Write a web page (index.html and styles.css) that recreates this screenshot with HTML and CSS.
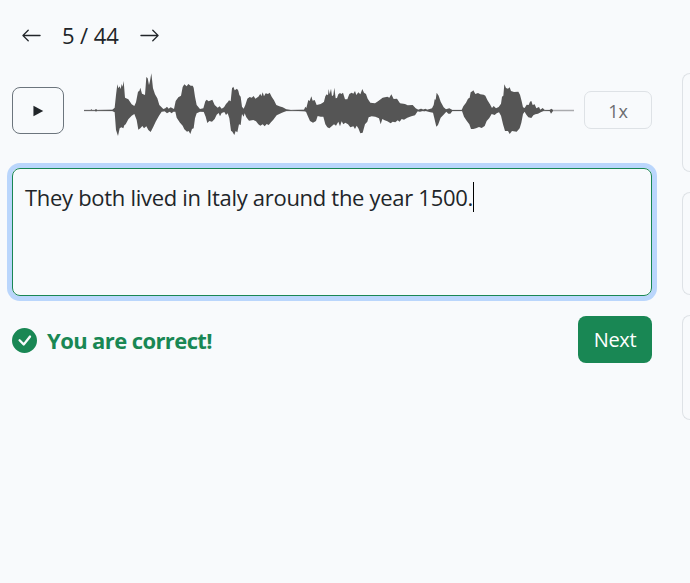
FILE: index.html
```html
<!DOCTYPE html>
<html lang="en">
<head>
<meta charset="utf-8">
<title>Dictation</title>
<link rel="stylesheet" href="styles.css">
</head>
<body>
<div class="page">
  <main class="exercise">
    <nav class="pager">
      <svg class="arrow" viewBox="0 0 16 16"><path fill-rule="evenodd" d="M15 8a.5.5 0 0 0-.5-.5H2.707l3.147-3.146a.5.5 0 1 0-.708-.708l-4 4a.5.5 0 0 0 0 .708l4 4a.5.5 0 0 0 .708-.708L2.707 8.5H14.5A.5.5 0 0 0 15 8"/></svg>
      <span class="count">5 / 44</span>
      <svg class="arrow" viewBox="0 0 16 16"><path fill-rule="evenodd" d="M1 8a.5.5 0 0 1 .5-.5h11.793l-3.147-3.146a.5.5 0 0 1 .708-.708l4 4a.5.5 0 0 1 0 .708l-4 4a.5.5 0 0 1-.708-.708L13.293 8.5H1.5A.5.5 0 0 1 1 8"/></svg>
    </nav>
    <div class="player">
      <button class="play" aria-label="Play"><svg viewBox="0 0 12 12"><path d="M.5.2 11.2 6 .5 11.8z"/></svg></button>
      <svg class="wave" viewBox="0 0 1470 210">
        <path class="axis" d="M0 119.500H1470v4H0z"/>
        <path transform="translate(-12 -15)" d="M12 135 32 135 34 132 36 135 45 135 48 131 51 135 97 134 104 128 108 90 112 58 115 70 119 64 122 72 125 57 128 65 131 48 135 98 145 103 155 118 163 123 168 112 174 80 178 78 181 68 186 86 195 90 199 36 203 40 207 60 210 48 214 25 219 70 225 88 232 100 238 120 250 132 256 130 261 125 266 131 272 127 282 132 287 108 295 97 303 92 308 66 313 58 320 64 325 57 332 62 338 62 341 68 345 95 350 120 360 132 372 132 372 140 360 140 350 145 345 160 341 190 336 192 331 207 326 198 321 200 313 193 308 182 300 173 290 158 286 140 280 140 275 145 269 140 261 145 254 139 245 140 237 152 227 170 220 185 212 201 205 195 199 184 192 190 187 183 181 190 175 194 170 165 163 147 155 152 145 163 137 178 133 181 130 190 124 187 119 190 114 213 108 195 104 142 97 138 51 137 48 140 45 137 12 137z"/>
        <path transform="translate(348 -15)" d="M0 132 10 130 16 109 20 104 26 109 37 104 44 120 53 128 59 124 65 131 72 127 78 117 83 112 87 106 92 109 96 70 100 65 104 76 111 71 115 77 118 90 122 95 126 125 131 131 136 120 142 101 149 96 155 98 161 93 166 101 175 95 181 86 184 94 188 82 192 94 197 85 204 87 209 83 215 95 222 106 229 120 238 124 248 127 259 133 272 135 312 134 316 125 319 129 325 105 329 108 334 94 338 107 344 105 350 120 362 117 373 110 373 155 362 155 353 153 348 168 339 173 330 168 323 152 318 140 313 139 277 137 259 138 246 143 230 151 220 164 213 172 206 180 200 177 194 184 188 178 181 182 175 178 168 169 160 165 147 167 139 157 134 145 131 155 126 147 122 180 117 178 112 202 107 198 103 210 97 200 93 197 88 160 83 145 78 150 73 141 65 144 60 154 56 144 50 149 44 162 36 170 28 168 22 174 17 155 11 140 0 138z"/>
        <path transform="translate(648 -15)" d="M70 118 76 94 80 88 84 91 86 72 89 88 93 71 96 94 100 90 103 68 107 100 111 99 115 88 120 84 124 87 129 83 135 103 142 103 148 87 155 83 160 86 165 78 169 90 175 82 181 88 187 72 192 83 198 87 203 101 211 113 225 115 234 109 248 98 262 95 268 98 274 88 281 102 291 101 300 115 315 117 323 121 338 120 347 130 355 134 362 131 367 134 375 133 375 139 367 138 360 140 353 139 345 151 334 154 322 158 312 164 305 162 299 170 293 166 286 172 278 170 272 175 262 169 254 166 247 162 242 178 237 160 226 155 215 154 206 157 202 170 195 178 188 203 181 205 175 190 170 182 165 192 160 184 151 187 144 178 136 173 130 178 125 169 120 184 115 170 108 182 102 178 95 184 88 190 82 187 76 178 70 155z"/>
        <path transform="translate(1008 -15)" d="M0 133 5 131 10 135 16 131 22 134 36 130 41 120 44 103 47 104 50 83 56 92 62 110 71 127 78 133 88 130 97 135 125 135 130 124 138 113 144 101 149 98 152 82 157 79 160 76 166 87 174 84 181 88 191 89 196 92 202 105 210 118 216 129 221 123 228 130 236 126 243 116 246 95 250 92 253 58 258 69 264 71 269 67 273 78 282 81 295 80 300 89 305 109 309 127 314 129 320 119 326 120 330 110 334 108 338 120 344 118 349 130 357 126 361 134 368 129 374 135 389 135 394 131 399 135 399 138 393 146 389 138 372 137 362 142 354 146 346 148 340 151 334 159 325 157 318 148 314 140 309 147 304 173 299 190 290 200 276 198 269 207 264 198 255 198 249 178 243 152 237 142 230 145 224 150 215 147 208 159 200 168 194 183 185 189 177 186 168 190 160 192 153 192 148 178 140 167 132 155 126 138 97 138 91 146 85 146 79 140 70 150 62 158 54 180 49 185 43 160 39 143 28 141 18 138 0 138z"/>
      </svg>
      <button class="speed">1x</button>
    </div>
    <div class="answer"><span class="sentence">They both lived in Italy around the year 1500.</span><span class="caret"></span></div>
    <div class="result">
      <svg class="check" viewBox="0 0 16 16"><path d="M16 8A8 8 0 1 1 0 8a8 8 0 0 1 16 0m-3.970-3.030a.75.75 0 0 0-1.080.022L7.477 9.417 5.384 7.323a.75.75 0 0 0-1.060 1.060L6.970 11.030a.75.75 0 0 0 1.079-.020l3.992-4.990a.75.75 0 0 0-.010-1.050z"/></svg>
      <strong class="verdict">You are correct!</strong>
      <button class="next">Next</button>
    </div>
  </main>
  <aside class="cards">
    <div class="card first"></div>
    <div class="card second"></div>
    <div class="card third"></div>
  </aside>
</div>
</body>
</html>
```
FILE: styles.css
```css
* { box-sizing: border-box; }
body {
  margin: 0;
  height: 583px;
  overflow: hidden;
  background: #f8fafc;
  color: #212529;
  font-family: "Open Sans", "Noto Sans", sans-serif;
}
button { font-family: inherit; padding: 0; background: transparent; }
.page { display: flex; gap: 30px; padding-left: 12px; }
.exercise { width: 640px; flex: none; }
.pager {
  display: flex;
  align-items: center;
  height: 47px;
  margin-top: 12px;
  padding-left: 9px;
}
.arrow { width: 21px; height: 21px; fill: currentColor; }
.count {
  width: 57px;
  margin: 0 20px;
  padding-bottom: 2px;
  font-size: 22px;
  line-height: 30px;
  white-space: nowrap;
  letter-spacing: -0.1px;
}
.player { display: flex; align-items: center; height: 80px; margin-top: 11px; }
.play {
  display: flex;
  align-items: center;
  justify-content: center;
  width: 52px;
  height: 47px;
  padding-top: 2px;
  border: 1px solid #6c757d;
  border-radius: 8px;
}
.play svg { width: 11px; height: 12px; fill: #212529; }
.wave { width: 490px; height: 70px; margin: 0 10px 10px 20px; fill: #555; }
.axis { fill: #aaabae; }
.speed {
  width: 68px;
  height: 38px;
  border: 1px solid #dee2e6;
  border-radius: 7px;
  color: #6b6d70;
  font-size: 18px;
  padding-top: 1px;
}
.answer {
  display: flex;
  height: 128px;
  margin-top: 18px;
  padding: 13px 12px;
  border: 1px solid #198754;
  border-radius: 8px;
  box-shadow: 0 0 0 5px #bad6fc;
}
.sentence {
  font-size: 22px;
  line-height: 30px;
  letter-spacing: -0.3px;
  white-space: nowrap;
}
.caret { width: 1px; height: 30px; background: #000; }
.result { display: flex; align-items: center; height: 47px; margin-top: 20px; }
.check { width: 25px; height: 25px; margin-top: 1px; fill: #198754; }
.verdict {
  margin-left: 10px;
  color: #198754;
  font-size: 22px;
  line-height: 30px;
  letter-spacing: -0.6px;
}
.next {
  width: 74px;
  height: 47px;
  margin-left: auto;
  border: 0;
  border-radius: 8px;
  background: #198754;
  color: #fff;
  font-size: 20px;
  letter-spacing: -0.3px;
}
.cards { flex: 1; padding-top: 73px; }
.card { border: 1px solid #dee2e6; border-right: 0; border-radius: 8px 0 0 8px; }
.first { height: 99px; }
.second { height: 103px; margin-top: 20px; }
.third { height: 105px; margin-top: 20px; }
```
